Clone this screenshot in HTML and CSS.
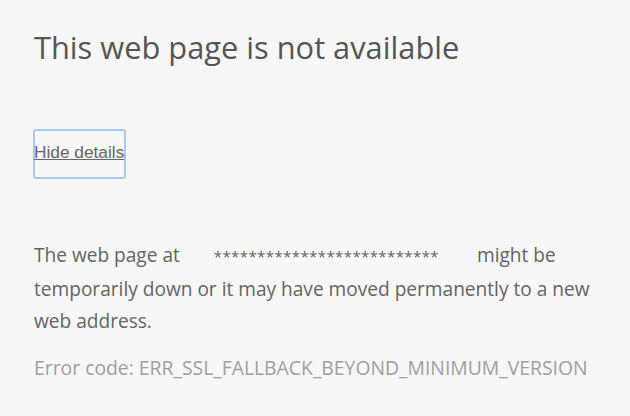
FILE: index.html
```html
<!DOCTYPE html>
<html>
<head>
<meta charset="utf-8">
<title>This web page is not available</title>
<link rel="stylesheet" href="styles.css">
</head>
<body>
<main class="page">
  <h1 class="title">This web page is not available</h1>
  <button class="details-btn" type="button"><span class="details-label">Hide details</span></button>
  <p class="summary">The web page at <span class="url">**************************</span> might be temporarily down or it may have moved permanently to a new web address.</p>
  <p class="error-code">Error code: ERR_SSL_FALLBACK_BEYOND_MINIMUM_VERSION</p>
</main>
</body>
</html>
```
FILE: styles.css
```css
html, body {
  margin: 0;
  padding: 0;
  background: #f7f7f7;
}

.page {
  display: flex;
  flex-direction: column;
  align-items: flex-start;
  padding: 27px 0 0 34px;
  width: 570px;
  font-family: "Open Sans", "Noto Sans", sans-serif;
}

.title {
  margin: 0;
  font-size: 30.8px;
  font-weight: 400;
  line-height: 40px;
  color: #555555;
}

.details-btn {
  margin: 62px 0 0 -1px;
  box-sizing: border-box;
  width: 93px;
  height: 50px;
  padding: 12px 0 0 0;
  display: flex;
  align-items: flex-start;
  justify-content: flex-start;
  background: transparent;
  border: 2px solid #a8c8f5;
  border-radius: 3px;
  font-family: "Liberation Sans", Arial, sans-serif;
  font-size: 17.3px;
  line-height: 19px;
  color: #666666;
}

.details-label {
  margin-left: -1px;
  text-decoration: underline;
  white-space: nowrap;
}

.summary {
  margin: 60px 0 0 0;
  font-size: 19.1px;
  line-height: 32.5px;
  color: #646464;
}

.url {
  margin: 0 33px 0 29px;
  font-size: 15px;
  letter-spacing: 0.4px;
}

.error-code {
  margin: 15px 0 0 0;
  font-size: 19.35px;
  line-height: 30px;
  color: #a0a0a0;
  white-space: nowrap;
}
```
